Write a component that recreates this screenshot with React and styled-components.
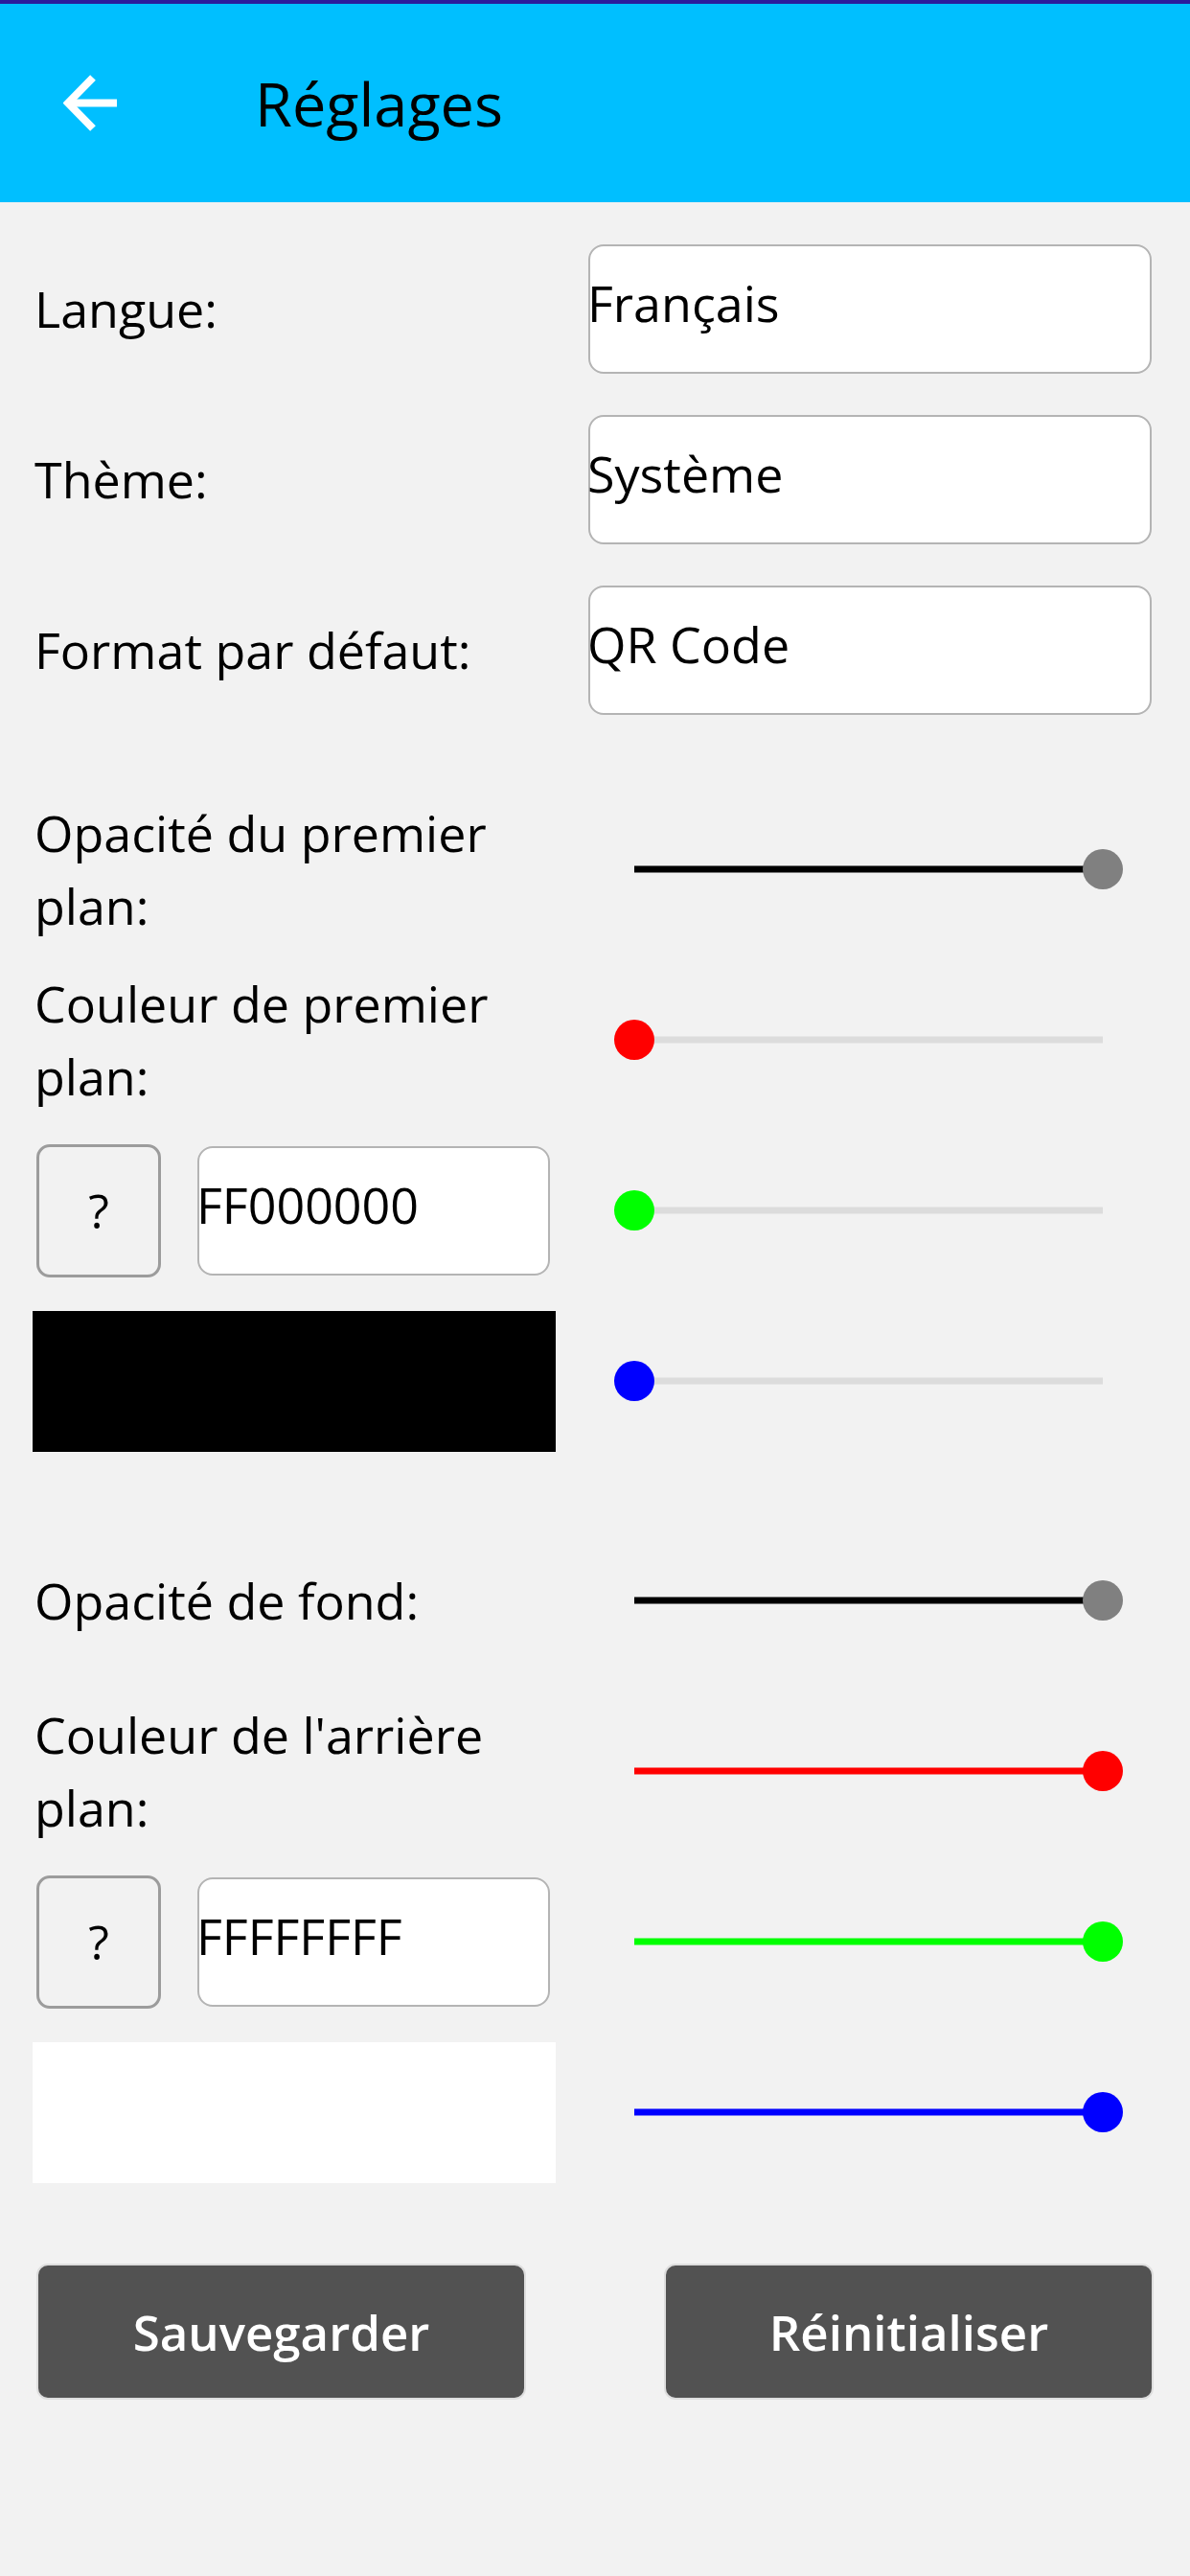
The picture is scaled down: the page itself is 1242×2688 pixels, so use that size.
import React from "react";
import styled, { createGlobalStyle } from "styled-components";

const GlobalStyle = createGlobalStyle`
  html, body {
    margin: 0;
    padding: 0;
    background: #f2f2f2;
  }
  body {
    font-family: "Open Sans", "Noto Sans", sans-serif;
    color: #000;
  }
`;

const Page = styled.div`
  min-height: 2688px;
  background: #f2f2f2;
`;

const Header = styled.header`
  height: 207px;
  border-top: 4px solid #2b1b9c;
  background: #00bfff;
  display: flex;
  align-items: center;
  padding-left: 66px;
  gap: 144px;
`;

const Title = styled.h1`
  margin: 0;
  font-size: 63px;
  font-weight: 400;
  line-height: 1;
  color: #000;
`;

const Content = styled.main`
  padding: 22px 40px 0 34px;
  display: flex;
  flex-direction: column;
  gap: 51px;
`;

const Section = styled.section`
  display: grid;
  grid-template-columns: 546px 588px;
  grid-auto-rows: 178px;
  column-gap: 34px;
  align-items: center;
`;

const Label = styled.div`
  padding-left: 2px;
  font-size: 52px;
  line-height: 76px;
`;

const Field = styled.div`
  height: 135px;
  box-sizing: border-box;
  background: #fff;
  border: 2px solid #b4b4b4;
  border-radius: 16px;
  display: flex;
  align-items: center;
  padding-bottom: 12px;
  text-indent: -3px;
  font-size: 52px;
  line-height: 1;
  width: ${(p) => (p.$w ? `${p.$w}px` : "100%")};
  white-space: nowrap;
`;

const HexRow = styled.div`
  display: flex;
  align-items: center;
  gap: 38px;
  padding-left: 4px;
`;

const HelpButton = styled.button`
  width: 130px;
  height: 139px;
  box-sizing: border-box;
  border: 3px solid #9c9c9c;
  border-radius: 14px;
  background: #f2f2f2;
  font-family: inherit;
  font-size: 50px;
  color: #000;
  padding: 0;
`;

const Swatch = styled.div`
  width: 546px;
  height: 147px;
  background: ${(p) => p.$color};
`;

const SliderWrap = styled.div`
  position: relative;
  height: 42px;
  margin: 0 30px 0 27px;
`;

const Track = styled.div`
  position: absolute;
  left: 21px;
  right: 21px;
  top: 50%;
  height: 7px;
  transform: translateY(-50%);
  background: #dcdcdc;
`;

const Fill = styled.div`
  height: 100%;
  background: ${(p) => p.$color};
`;

const Thumb = styled.div`
  position: absolute;
  top: 0;
  width: 42px;
  height: 42px;
  border-radius: 50%;
  background: ${(p) => p.$color};
`;

const Actions = styled.div`
  height: 178px;
  display: flex;
  align-items: center;
  justify-content: space-between;
  margin: 0 -2px 0 4px;
`;

const ActionButton = styled.button`
  width: 511px;
  height: 142px;
  box-sizing: border-box;
  border: 2px solid #dedede;
  border-radius: 12px;
  background: #525252;
  color: #fff;
  font-family: inherit;
  font-size: 51px;
  font-weight: 600;
  padding: 0;
`;

const Slider = ({ value, fill, thumb }) => (
  <SliderWrap>
    <Track>
      <Fill $color={fill} style={{ width: `${value * 100}%` }} />
    </Track>
    <Thumb $color={thumb} style={{ left: `calc((100% - 42px) * ${value})` }} />
  </SliderWrap>
);

const BackArrow = () => (
  <svg width="56" height="59" viewBox="0 0 56 59" fill="none">
    <path d="M5 29.5H56" stroke="#fff" strokeWidth="8" />
    <path d="M31 3L5 29.5L31 56" stroke="#fff" strokeWidth="8" />
  </svg>
);

const ColorBlock = ({ title, opacityLabel, hex, swatch, value, opacity }) => (
  <Section>
    <Label>{opacityLabel}</Label>
    <Slider value={opacity} fill="#000" thumb="#808080" />
    <Label>{title}</Label>
    <Slider value={value} fill="#ff0000" thumb="#ff0000" />
    <HexRow>
      <HelpButton>?</HelpButton>
      <Field $w={368}>{hex}</Field>
    </HexRow>
    <Slider value={value} fill="#00ff00" thumb="#00ff00" />
    <Swatch $color={swatch} />
    <Slider value={value} fill="#0000ff" thumb="#0000ff" />
  </Section>
);

export default function App() {
  return (
    <Page>
      <GlobalStyle />
      <Header>
        <BackArrow />
        <Title>Réglages</Title>
      </Header>
      <Content>
        <Section>
          <Label>Langue:</Label>
          <Field>Français</Field>
          <Label>Thème:</Label>
          <Field>Système</Field>
          <Label>Format par défaut:</Label>
          <Field>QR Code</Field>
        </Section>
        <ColorBlock
          opacityLabel="Opacité du premier plan:"
          title="Couleur de premier plan:"
          hex="FF000000"
          swatch="#000"
          value={0}
          opacity={1}
        />
        <ColorBlock
          opacityLabel="Opacité de fond:"
          title="Couleur de l'arrière plan:"
          hex="FFFFFFFF"
          swatch="#fff"
          value={1}
          opacity={1}
        />
        <Actions>
          <ActionButton>Sauvegarder</ActionButton>
          <ActionButton>Réinitialiser</ActionButton>
        </Actions>
      </Content>
    </Page>
  );
}
